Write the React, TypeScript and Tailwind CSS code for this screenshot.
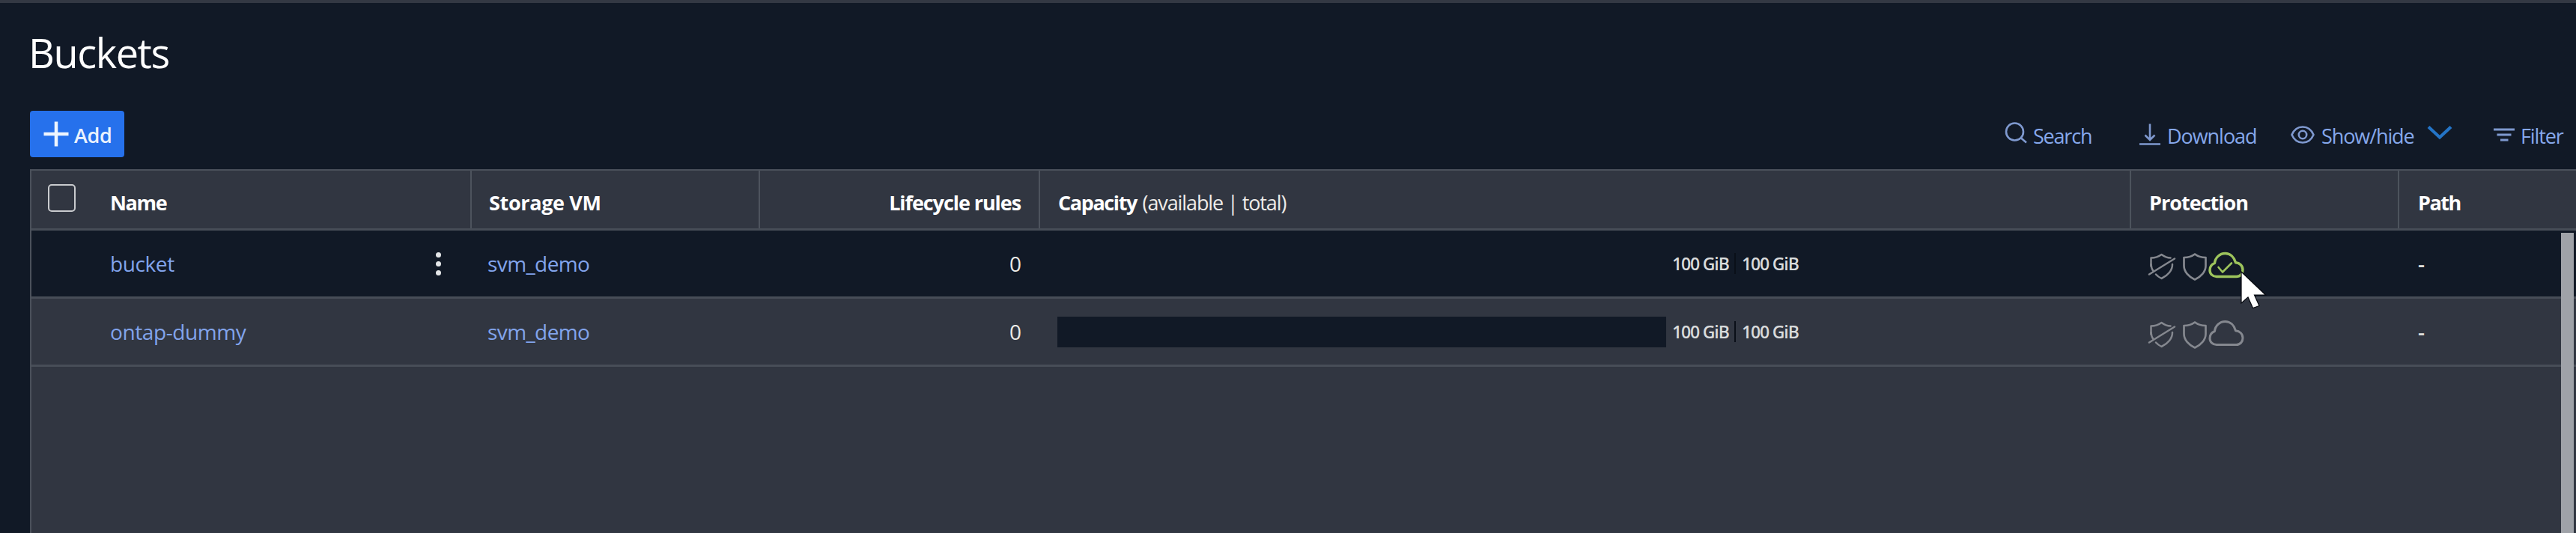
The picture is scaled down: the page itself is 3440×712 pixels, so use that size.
import type { ReactNode } from 'react';

const HEAD = 'whitespace-nowrap text-[27px] font-bold leading-[36px] text-white';
const LINK = 'whitespace-nowrap text-[28px] font-medium leading-[36px] text-[#82a4ec]';

function ShieldOff() {
  return (
    <svg width="38" height="38" viewBox="0 0 38 38" fill="none" stroke="#85888f" strokeWidth="2.5" strokeLinecap="round" strokeLinejoin="round">
      <path d="M4.500 19.500V8.500C10 8.500 14.500 7 18.500 4C22.500 7 26 8.500 30.500 8.500" />
      <path d="M33 17C33.200 25 27 32 18.500 36C15.500 34.500 13 32.800 11 30.500" />
      <path d="M4.500 17C4.700 20.500 5.500 23.500 7.500 26" />
      <path d="M2 30.500L36 9.500" />
    </svg>
  );
}

function Shield() {
  return (
    <svg width="34" height="38" viewBox="0 0 34 38" fill="none" stroke="#85888f" strokeWidth="2.7" strokeLinejoin="round">
      <path d="M17 2.500C13 5.500 7.500 7 2.500 7V18C2.500 26 9 33 17 36.500C25 33 31.500 26 31.500 18V7C26.500 7 21 5.500 17 2.500Z" />
    </svg>
  );
}

function Cloud({ ok }: { ok?: boolean }) {
  return (
    <svg width="48" height="36" viewBox="0 0 48 36" fill="none" stroke={ok ? '#9dc45c' : '#85888f'} strokeWidth={ok ? 3.4 : 3} strokeLinecap="round" strokeLinejoin="round">
      <path d="M11 33.500H37.500C42.500 33.500 46 29.500 46 24.500C46 19 42 15.200 36.500 14.800C34.500 7.500 29.500 2.500 22.500 2.500C15 2.500 9 8.500 8.500 15.500C4.500 17 2 20.500 2 25C2 30 6 33.500 11 33.500Z" />
      {ok && <path strokeWidth="2.6" d="M13.500 21L19 27.500L31 15.500" />}
    </svg>
  );
}

function Cursor() {
  return (
    <svg className="absolute left-[145px] top-[31px] z-10" width="40" height="56" viewBox="0 0 40 56" fill="#fff" stroke="#05080e" strokeWidth="1.2">
      <path d="M2 3V45L11 37L17.500 51.500L26 48.500L19.500 34H34.500Z" />
    </svg>
  );
}

function Row({ name, hovered }: { name: string; hovered?: boolean }) {
  return (
    <div className={`flex h-[91px] items-center border-b-3 border-[#474d57] ${hovered ? 'bg-[#111926]' : 'bg-[#313641]'}`}>
      <div className="flex w-[587px] items-center justify-between pl-[105px] pr-[39px]">
        <span className={`${LINK} ${hovered ? 'tracking-[-0.400px]' : 'tracking-[-0.400px]'}`}>{name}</span>
        {hovered && (
          <span className="flex flex-col items-center gap-[5px] px-px">
            <i className="size-[7px] rounded-full bg-[#e4e6e8]" />
            <i className="size-[7px] rounded-full bg-[#e4e6e8]" />
            <i className="size-[7px] rounded-full bg-[#e4e6e8]" />
          </span>
        )}
      </div>
      <div className="w-[385px] pl-[22px]">
        <span className={`${LINK} tracking-[-0.600px]`}>svm_demo</span>
      </div>
      <div className="w-[374px] pr-[24px] text-right text-[28px] font-medium leading-[36px] text-[#ecebe7]">0</div>
      <div className="flex w-[1458px] items-center pl-[24px]">
        <div className="h-[41px] w-[813px] bg-[#111926]" />
        <div className="ml-[8px] flex items-center text-[23px] font-semibold leading-[32px] tracking-[-1.150px] text-[#d9dbdc]">
          <span className="w-[83px] whitespace-nowrap">100 GiB</span>
          <span className="mr-[8px] h-[28px] w-[2px] bg-[#0a0f18]" />
          <span className="whitespace-nowrap">100 GiB</span>
        </div>
      </div>
      <div className="relative flex w-[358px] items-center pl-[22px] pt-[5px]">
        <ShieldOff />
        <span className="ml-[8px] mt-[3px]"><Shield /></span>
        <span className="ml-[1px] -mt-[1px]"><Cloud ok={hovered} /></span>
        {hovered && <Cursor />}
      </div>
      <div className="flex-1 pl-[25px]">
        <span className="text-[28px] font-semibold leading-[36px] text-[#dddddb]">-</span>
      </div>
    </div>
  );
}

function Tool({ icon, children, className }: { icon: ReactNode; children: ReactNode; className: string }) {
  return (
    <div className={`flex items-center whitespace-nowrap text-[27px] font-medium leading-[36px] text-[#86a8ec] ${className}`}>
      {icon}
      <span className="mt-[5px]">{children}</span>
    </div>
  );
}

const STROKE = { fill: 'none', stroke: '#7f99cf', strokeWidth: 2.6 } as const;

export default function App() {
  return (
    <div className="flex h-[712px] w-[3440px] flex-col overflow-hidden bg-[#111926] font-['Open_Sans','Noto_Sans',sans-serif]">
      <div className="h-[4px] shrink-0 bg-[#333843]" />
      <h1 className="mt-[31px] h-[72px] shrink-0 pl-[38px] text-[54px] font-medium leading-[70px] tracking-[-1.400px] text-white">Buckets</h1>

      <div className="mt-[41px] flex h-[62px] shrink-0 items-center justify-between pl-[40px]">
        <button className="flex h-[62px] w-[126px] items-center rounded-[4px] bg-[#2671ec] pl-[18px] text-[27px] font-semibold leading-[36px] tracking-[-0.330px] text-[#eaf2fd]">
          <svg width="34" height="34" viewBox="0 0 34 34" stroke="#eef5fe" strokeWidth="4.500" className="mr-[7px]">
            <path d="M0.500 17H33.500M17 0.500V33.500" />
          </svg>
          <span className="mt-[4px]">Add</span>
        </button>
        <div className="flex items-center">
          <Tool className="w-[180px] tracking-[-1.200px]" icon={
            <svg width="32" height="32" viewBox="0 0 32 32" {...STROKE} className="mr-[6px] -mt-px"><circle cx="13.500" cy="13" r="11.500" /><path d="M21.500 21L29 27.500" /></svg>
          }>Search</Tool>
          <Tool className="w-[202px] tracking-[-1.050px]" icon={
            <svg width="28" height="30" viewBox="0 0 28 30" {...STROKE} className="mr-[9px] mt-px"><path d="M14 0.500V21M7.500 15.500L14 22L20.500 15.500M0 27.500H28" /></svg>
          }>Download</Tool>
          <Tool className="w-[271px] tracking-[-1.100px]" icon={
            <svg width="32" height="28" viewBox="0 0 32 28" {...STROKE} className="mr-[9px] mt-[2px]"><path d="M1.500 14C4.500 7 9.500 3.500 16 3.500C22.500 3.500 27.500 7 30.500 14C27.500 21 22.500 24.500 16 24.500C9.500 24.500 4.500 21 1.500 14Z" /><circle cx="16" cy="14" r="5.200" /></svg>
          }>
            <span className="flex items-center">
              Show/hide
              <svg width="34" height="20" viewBox="0 0 34 20" fill="none" stroke="#2474c6" strokeWidth="4.200" className="-mt-[9px] ml-[17px]"><path d="M2 2.500L17 16.500L32 2.500" /></svg>
            </span>
          </Tool>
          <Tool className="w-[110px] tracking-[-1.100px]" icon={
            <svg width="28" height="20" viewBox="0 0 28 20" fill="none" stroke="#7f99cf" strokeWidth="3.200" className="mr-[8px] mt-[2px]"><path d="M0 3H28M4.500 10H23.500M9 17H19.500" /></svg>
          }>Filter</Tool>
        </div>
      </div>

      <div className="relative ml-[40px] mt-[16px] flex-1 border-l-2 border-t-2 border-[#4b515b] bg-[#313641]">
        <div className="flex h-[80px] items-stretch border-b-3 border-[#474d57]">
          <div className="flex w-[588px] border-r-2 border-[#4d535d] pl-[22px] pt-[18px]">
            <span className="size-[37px] rounded-[5px] border-[2.500px] border-[#c9cbce]" />
            <span className={`${HEAD} ml-[46px] mt-[7px] tracking-[-1.350px]`}>Name</span>
          </div>
          <div className={`${HEAD} w-[385px] border-r-2 border-[#4d535d] pl-[23px] pt-[25px] tracking-[-0.350px]`}>Storage VM</div>
          <div className={`${HEAD} w-[374px] border-r-2 border-[#4d535d] pr-[24px] pt-[25px] text-right tracking-[-1.070px]`}>Lifecycle rules</div>
          <div className={`${HEAD} w-[1457px] border-r-2 border-[#4d535d] pl-[24px] pt-[25px] tracking-[-1.400px]`}>
            Capacity <span className="ml-[2px] font-medium tracking-[-1.100px] text-[#eeece9]">(available | total)</span>
          </div>
          <div className={`${HEAD} w-[358px] border-r-2 border-[#4d535d] pl-[24px] pt-[25px] tracking-[-0.980px]`}>Protection</div>
          <div className={`${HEAD} pl-[25px] pt-[25px] tracking-[-1.500px]`}>Path</div>
        </div>
        <Row name="bucket" hovered />
        <Row name="ontap-dummy" />
        <div className="absolute bottom-0 right-[3px] top-[83px] w-[17px] bg-[#9fa2a8]" />
      </div>
    </div>
  );
}
